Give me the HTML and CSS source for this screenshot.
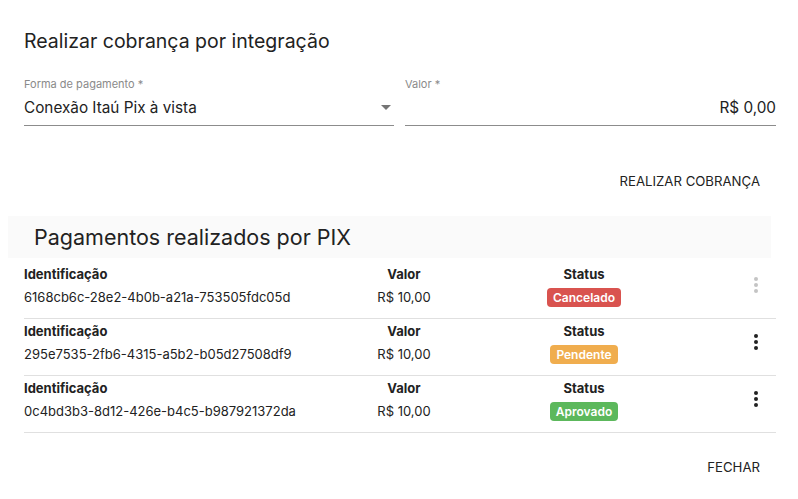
FILE: index.html
```html
<!DOCTYPE html>
<html lang="pt-BR">
<head>
<meta charset="utf-8">
<link rel="stylesheet" href="styles.css">
</head>
<body>
<div class="dialog">
  <h2 class="title">Realizar cobrança por integração</h2>
  <div class="fields">
    <div class="field">
      <label class="label">Forma de pagamento *</label>
      <div class="control">
        <span class="value">Conexão Itaú Pix à vista</span>
        <span class="caret"></span>
      </div>
    </div>
    <div class="field">
      <label class="label">Valor *</label>
      <div class="control right">
        <span class="value">R$ 0,00</span>
      </div>
    </div>
  </div>
  <div class="actions">
    <button class="btn">REALIZAR COBRANÇA</button>
  </div>
  <div class="section-head">Pagamentos realizados por PIX</div>
  <div class="list">
    <div class="row">
      <div class="cell"><div class="h">Identificação</div><div class="v">6168cb6c-28e2-4b0b-a21a-753505fdc05d</div></div>
      <div class="cell center"><div class="h">Valor</div><div class="v">R$ 10,00</div></div>
      <div class="cell center"><div class="h">Status</div><span class="badge red">Cancelado</span></div>
      <div class="cell menu"><span class="kebab disabled"><i></i><i></i><i></i></span></div>
    </div>
    <div class="row">
      <div class="cell"><div class="h">Identificação</div><div class="v">295e7535-2fb6-4315-a5b2-b05d27508df9</div></div>
      <div class="cell center"><div class="h">Valor</div><div class="v">R$ 10,00</div></div>
      <div class="cell center"><div class="h">Status</div><span class="badge orange">Pendente</span></div>
      <div class="cell menu"><span class="kebab"><i></i><i></i><i></i></span></div>
    </div>
    <div class="row">
      <div class="cell"><div class="h">Identificação</div><div class="v">0c4bd3b3-8d12-426e-b4c5-b987921372da</div></div>
      <div class="cell center"><div class="h">Valor</div><div class="v">R$ 10,00</div></div>
      <div class="cell center"><div class="h">Status</div><span class="badge green">Aprovado</span></div>
      <div class="cell menu"><span class="kebab"><i></i><i></i><i></i></span></div>
    </div>
  </div>
  <div class="actions bottom">
    <button class="btn">FECHAR</button>
  </div>
</div>
</body>
</html>
```

FILE: styles.css
```css
* { box-sizing: border-box; }
html, body { margin: 0; padding: 0; background: #fff; }
body {
  font-family: Inter, "Noto Sans", sans-serif;
  color: #212121;
  width: 798px;
  height: 499px;
  overflow: hidden;
}
.dialog { padding: 0 22px 0 24px; }
.title {
  margin: 0;
  padding-top: 28px;
  font-size: 19.5px;
  font-weight: 400;
  line-height: 26px;
  color: #222;
}
.fields {
  display: grid;
  grid-template-columns: 370px 371px;
  column-gap: 11px;
  margin-top: 23px;
}
.field { display: flex; flex-direction: column; }
.label {
  font-size: 11px;
  line-height: 14px;
  color: #8a8a8a;
}
.control {
  display: flex;
  align-items: center;
  justify-content: space-between;
  height: 35px;
  border-bottom: 1px solid #8c8c8c;
  padding-bottom: 2px;
}
.control.right { justify-content: flex-end; }
.value { font-size: 15.3px; color: #222; }
.caret {
  width: 0; height: 0;
  border-left: 5px solid transparent;
  border-right: 5px solid transparent;
  border-top: 5px solid #757575;
  margin-right: 3px;
}
.actions {
  display: flex;
  justify-content: flex-end;
  margin-top: 45px;
  padding-right: 16px;
}
.btn {
  font-family: inherit;
  background: none;
  border: 0;
  padding: 0;
  font-size: 13.2px;
  line-height: 20px;
  color: #222;
  cursor: pointer;
}
.section-head {
  margin: 25px 5px 0 -16px;
  height: 42px;
  background: #fafafa;
  padding-left: 26px;
  font-size: 21.5px;
  line-height: 42px;
  color: #222;
}
.list { margin-top: 4px; }
.row {
  display: grid;
  grid-template-columns: 300px 160px 200px 1fr;
  height: 57px;
  border-bottom: 1px solid #e0e0e0;
  padding-top: 2px;
}
.cell { display: flex; flex-direction: column; }
.cell.center { align-items: center; }
.h { font-size: 13px; font-weight: 700; line-height: 20px; color: #222; }
.v { font-size: 13px; line-height: 26px; color: #222; }
.badge {
  margin-top: 4px;
  font-size: 12px;
  font-weight: 600;
  color: #fff;
  border-radius: 4px;
  padding: 0 6px;
  line-height: 19px;
}
.badge.red { background: #d9534f; }
.badge.orange { background: #f0ad4e; }
.badge.green { background: #5cb85c; }
.cell.menu { align-items: flex-end; padding-right: 18px; }
.kebab { display: flex; flex-direction: column; gap: 2px; padding-top: 13px; }
.kebab i { display: block; width: 4px; height: 4px; border-radius: 50%; background: #222; }
.kebab.disabled i { background: #c4c4c4; }
.actions.bottom { margin-top: 24px; }
```
